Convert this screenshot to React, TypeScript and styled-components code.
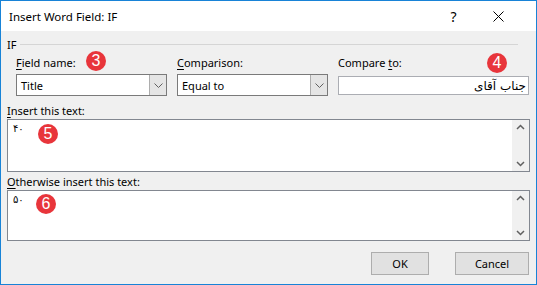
import styled, { createGlobalStyle } from 'styled-components';

const GlobalStyle = createGlobalStyle`
  html, body {
    margin: 0;
    padding: 0;
    background: #ffffff;
  }
  body {
    font-family: "Noto Sans", "Liberation Sans", sans-serif;
    font-size: 11px;
    color: #000;
  }
`;

const Dialog = styled.div`
  position: relative;
  width: 537px;
  height: 285px;
  box-sizing: border-box;
  border: 1px solid #1883d7;
  background: #f0f0f0;
  display: flex;
  flex-direction: column;
  overflow: hidden;
`;

const TitleBar = styled.div`
  height: 30px;
  background: #ffffff;
  display: flex;
  align-items: center;
  padding: 0 15px 0 8px;
  font-size: 11.5px;
`;

const TitleText = styled.div`
  flex: 1;
`;

const TitleButton = styled.div`
  width: 45px;
  height: 30px;
  display: flex;
  align-items: center;
  justify-content: center;
  font-size: 14px;
  color: #000;
`;

const Body = styled.div`
  flex: 1;
  display: flex;
  flex-direction: column;
  padding: 6px 6px 0;
`;

const GroupHeader = styled.div`
  display: flex;
  align-items: center;
  height: 14px;
  gap: 4px;
`;

const GroupLine = styled.div`
  flex: 1;
  height: 1px;
  background: #d5d5d5;
  margin-right: 12px;
`;

const FieldsRow = styled.div`
  display: flex;
  gap: 10px;
  padding-left: 9px;
  margin-top: 5px;
`;

const FieldColumn = styled.div<{ $width: number }>`
  width: ${({ $width }) => $width}px;
  display: flex;
  flex-direction: column;
`;

const Label = styled.div<{ $top?: number }>`
  height: 14px;
  line-height: 14px;
  margin-top: ${({ $top }) => $top ?? 0}px;
  white-space: nowrap;
`;

const Combo = styled.div`
  margin-top: 4px;
  height: 22px;
  box-sizing: border-box;
  border: 1px solid #7a7a7a;
  background: #fff;
  display: flex;
  align-items: center;
`;

const ComboValue = styled.div`
  flex: 1;
  padding-left: 4px;
`;

const ComboButton = styled.div`
  width: 16px;
  height: 100%;
  background: #e5e5e5;
  border-left: 1px solid #adadad;
  display: flex;
  align-items: center;
  justify-content: center;
`;

const TextBox = styled.div`
  margin-top: 6px;
  height: 19px;
  box-sizing: border-box;
  border: 1px solid #abadb3;
  background: #fff;
  display: flex;
  align-items: center;
  justify-content: flex-end;
  padding-right: 2px;
`;

const RtlText = styled.span`
  direction: rtl;
  font-family: "DejaVu Sans", "Noto Sans", sans-serif;
  font-size: 12px;
`;

const TextArea = styled.div<{ $height: number }>`
  margin-top: 1px;
  height: ${({ $height }) => $height}px;
  box-sizing: border-box;
  border: 1px solid #828790;
  background: #fff;
  display: flex;
`;

const AreaText = styled.div`
  flex: 1;
  padding: 3px 0 0 5px;
  font-family: "DejaVu Sans", "Noto Sans", sans-serif;
  font-size: 10px;
`;

const ScrollBar = styled.div`
  width: 17px;
  background: #f0f0f0;
  display: flex;
  flex-direction: column;
  justify-content: space-between;
  align-items: center;
  padding: 4px 0;
`;

const ButtonRow = styled.div`
  display: flex;
  justify-content: flex-end;
  gap: 26px;
  margin-top: 11px;
  padding-right: 1px;
`;

const DialogButton = styled.div<{ $width: number }>`
  width: ${({ $width }) => $width}px;
  height: 23px;
  box-sizing: border-box;
  border: 1px solid #adadad;
  background: #e1e1e1;
  display: flex;
  align-items: center;
  justify-content: center;
`;

const Badge = styled.div<{ $x: number; $y: number }>`
  position: absolute;
  left: ${({ $x }) => $x - 10}px;
  top: ${({ $y }) => $y - 10}px;
  width: 20px;
  height: 20px;
  border-radius: 50%;
  background: #e8353b;
  color: #fff;
  font-family: "Liberation Sans", sans-serif;
  font-size: 16px;
  display: flex;
  align-items: center;
  justify-content: center;
`;

const U = styled.span`
  text-decoration: underline;
  text-underline-offset: 2px;
`;

const Chevron = ({ up }: { up?: boolean }) => (
  <svg width="9" height="6" viewBox="0 0 9 6">
    <path
      d={up ? 'M1 5 L4.5 1.5 L8 5' : 'M1 1 L4.5 4.5 L8 1'}
      fill="none"
      stroke="#606060"
      strokeWidth="1.5"
    />
  </svg>
);

const ComboChevron = () => (
  <svg width="9" height="5" viewBox="0 0 9 5">
    <path d="M0.5 0.5 L4.5 4.5 L8.5 0.5" fill="none" stroke="#606060" strokeWidth="1" />
  </svg>
);

const CloseIcon = () => (
  <svg width="11" height="11" viewBox="0 0 11 11">
    <path d="M0.5 0.5 L10.5 10.5 M10.5 0.5 L0.5 10.5" stroke="#000" strokeWidth="1" />
  </svg>
);

export default function App() {
  return (
    <>
      <GlobalStyle />
      <Dialog>
        <TitleBar>
          <TitleText>Insert Word Field: IF</TitleText>
          <TitleButton>?</TitleButton>
          <TitleButton>
            <CloseIcon />
          </TitleButton>
        </TitleBar>
        <Body>
          <GroupHeader>
            IF
            <GroupLine />
          </GroupHeader>
          <FieldsRow>
            <FieldColumn $width={151}>
              <Label>
                <U>F</U>ield name:
              </Label>
              <Combo>
                <ComboValue>Title</ComboValue>
                <ComboButton>
                  <ComboChevron />
                </ComboButton>
              </Combo>
            </FieldColumn>
            <FieldColumn $width={151}>
              <Label>
                <U>C</U>omparison:
              </Label>
              <Combo>
                <ComboValue>Equal to</ComboValue>
                <ComboButton>
                  <ComboChevron />
                </ComboButton>
              </Combo>
            </FieldColumn>
            <FieldColumn $width={191}>
              <Label>
                Compare <U>t</U>o:
              </Label>
              <TextBox>
                <RtlText>جناب آقای</RtlText>
              </TextBox>
            </FieldColumn>
          </FieldsRow>
          <Label $top={8}>
            <U>I</U>nsert this text:
          </Label>
          <TextArea $height={53}>
            <AreaText>۴۰</AreaText>
            <ScrollBar>
              <Chevron up />
              <Chevron />
            </ScrollBar>
          </TextArea>
          <Label $top={3}>
            <U>O</U>therwise insert this text:
          </Label>
          <TextArea $height={51}>
            <AreaText>۵۰</AreaText>
            <ScrollBar>
              <Chevron up />
              <Chevron />
            </ScrollBar>
          </TextArea>
          <ButtonRow>
            <DialogButton $width={58}>OK</DialogButton>
            <DialogButton $width={74}>Cancel</DialogButton>
          </ButtonRow>
        </Body>
        <Badge $x={95} $y={60}>3</Badge>
        <Badge $x={496} $y={62}>4</Badge>
        <Badge $x={47} $y={133}>5</Badge>
        <Badge $x={45} $y={203}>6</Badge>
      </Dialog>
    </>
  );
}
